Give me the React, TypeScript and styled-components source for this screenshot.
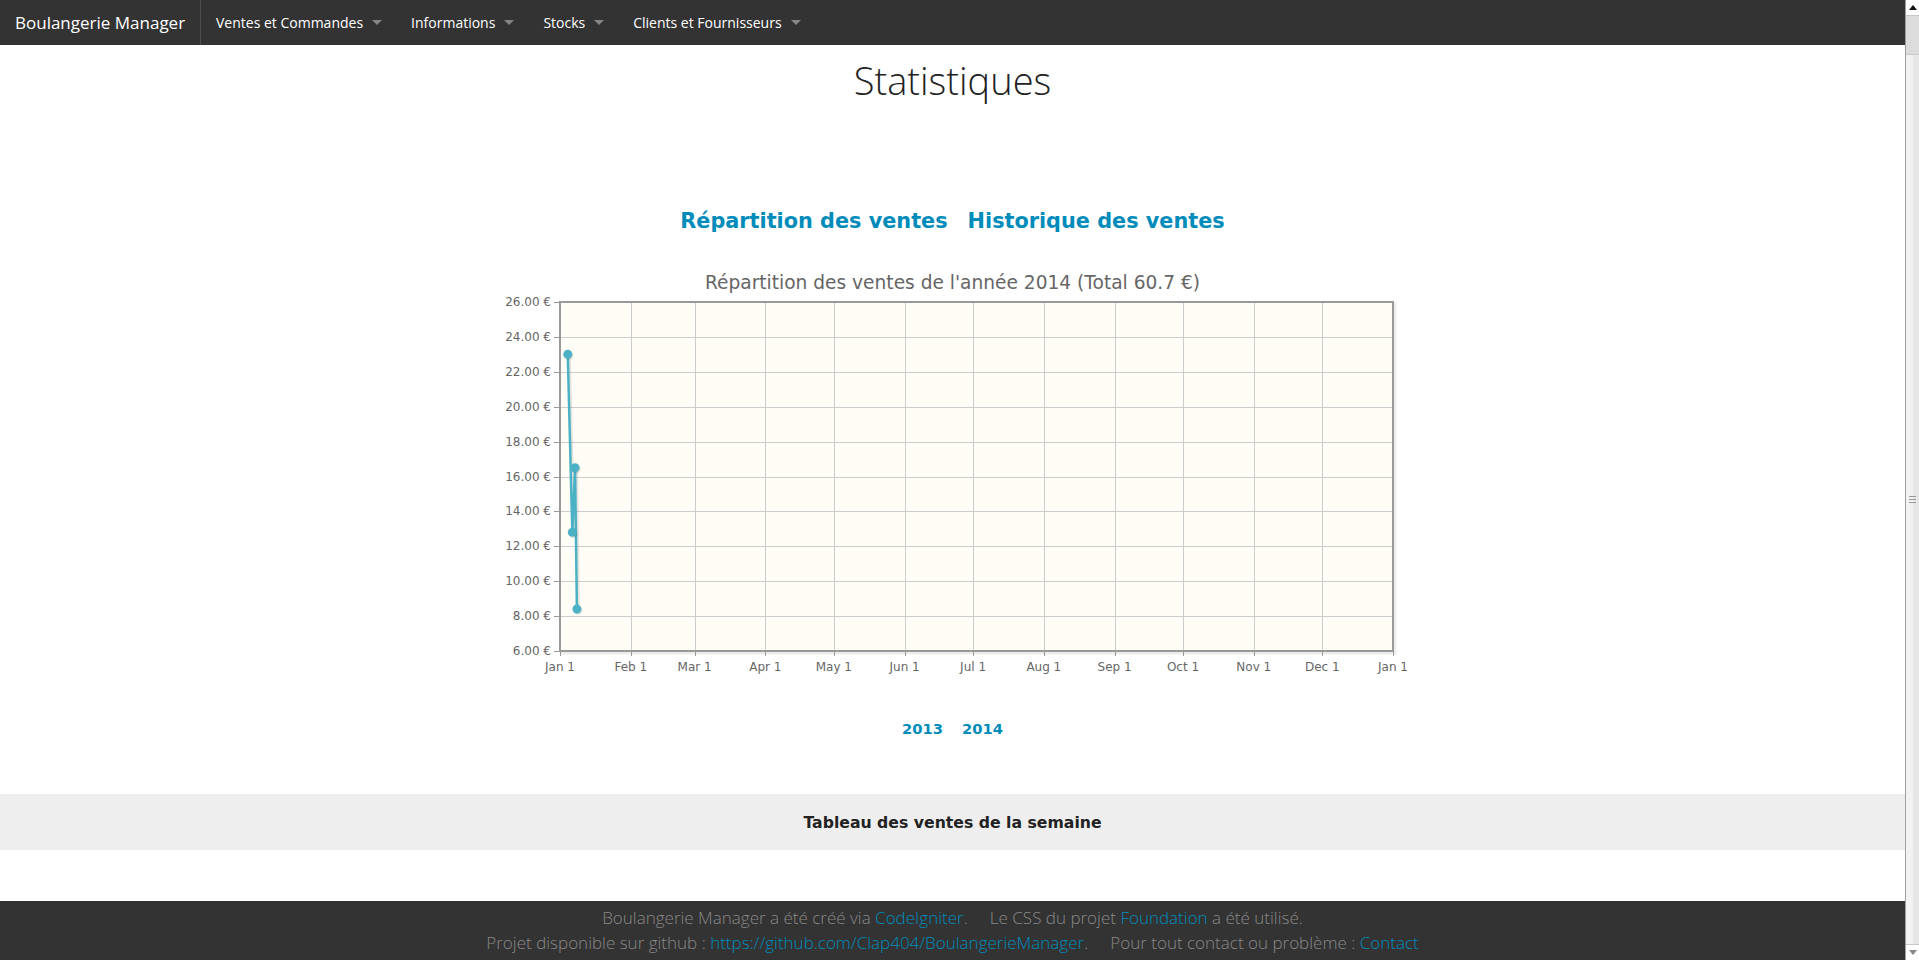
import React from 'react'
import styled, { createGlobalStyle } from 'styled-components'

const GlobalStyle = createGlobalStyle`
	html, body {
		margin: 0;
		padding: 0;
		background: #fff;
		font-family: 'Open Sans', 'Liberation Sans', sans-serif;
	}
	a {
		color: #008cba;
		text-decoration: none;
	}
`

const menus = ['Ventes et Commandes', 'Informations', 'Stocks', 'Clients et Fournisseurs']

// jqplot-like chart geometry
const CHART_W = 961
const CHART_H = 420
const PL = 88
const PR = 921
const PT = 39
const PB = 388
const Y_MIN = 6
const Y_MAX = 26
const months = [
	{ label: 'Jan 1', day: 0 },
	{ label: 'Feb 1', day: 31 },
	{ label: 'Mar 1', day: 59 },
	{ label: 'Apr 1', day: 90 },
	{ label: 'May 1', day: 120 },
	{ label: 'Jun 1', day: 151 },
	{ label: 'Jul 1', day: 181 },
	{ label: 'Aug 1', day: 212 },
	{ label: 'Sep 1', day: 243 },
	{ label: 'Oct 1', day: 273 },
	{ label: 'Nov 1', day: 304 },
	{ label: 'Dec 1', day: 334 },
	{ label: 'Jan 1', day: 365 },
]
const sales = [
	{ day: 3.4, value: 23.0 },
	{ day: 5.4, value: 12.8 },
	{ day: 6.6, value: 16.5 },
	{ day: 7.4, value: 8.4 },
]

const xPos = (day: number) => PL + (day * (PR - PL)) / 365
const yPos = (v: number) => PT + ((Y_MAX - v) * (PB - PT)) / (Y_MAX - Y_MIN)
const crisp = (n: number) => Math.round(n) + 0.5

const SalesChart = () => {
	const yTicks: number[] = []
	for (let v = Y_MIN; v <= Y_MAX; v += 2) yTicks.push(v)
	const line = sales.map((p) => `${xPos(p.day)},${yPos(p.value)}`).join(' ')
	const shadowLine = sales.map((p) => `${xPos(p.day) + 1.5},${yPos(p.value) + 1.5}`).join(' ')

	return (
		<ChartSvg width={CHART_W} height={CHART_H} viewBox={`0 0 ${CHART_W} ${CHART_H}`}>
			<text x={480.5} y={19} textAnchor="middle" dominantBaseline="central" className="title">
				Répartition des ventes de l'année 2014 (Total 60.7 €)
			</text>
			<rect x={PL + 2} y={PT + 2} width={PR - PL} height={PB - PT} fill="none" stroke="rgba(0,0,0,0.07)" strokeWidth={3} />
			<rect x={PL} y={PT} width={PR - PL} height={PB - PT} fill="#fffdf6" />
			{yTicks.slice(1, -1).map((v) => (
				<line key={v} x1={PL} x2={PR} y1={crisp(yPos(v))} y2={crisp(yPos(v))} stroke="#cccccc" strokeWidth={1} />
			))}
			{months.slice(1, -1).map((m) => (
				<line key={m.day} x1={crisp(xPos(m.day))} x2={crisp(xPos(m.day))} y1={PT} y2={PB} stroke="#cccccc" strokeWidth={1} />
			))}
			<rect x={PL} y={PT} width={PR - PL} height={PB - PT} fill="none" stroke="#999999" strokeWidth={2} />
			{yTicks.map((v) => (
				<g key={v}>
					<line x1={PL - 6} x2={PL} y1={crisp(yPos(v))} y2={crisp(yPos(v))} stroke="#999999" strokeWidth={1} />
					<text x={PL - 9} y={yPos(v)} textAnchor="end" dominantBaseline="central" className="tick">
						{v.toFixed(2)} €
					</text>
				</g>
			))}
			{months.map((m, i) => (
				<g key={i}>
					<line x1={crisp(xPos(m.day))} x2={crisp(xPos(m.day))} y1={PB} y2={PB + 5} stroke="#999999" strokeWidth={1} />
					<text x={xPos(m.day)} y={404} textAnchor="middle" dominantBaseline="central" className="tick">
						{m.label}
					</text>
				</g>
			))}
			<polyline points={shadowLine} fill="none" stroke="rgba(0,0,0,0.1)" strokeWidth={3} strokeLinejoin="round" />
			<polyline points={line} fill="none" stroke="#4bb2c5" strokeWidth={2.5} strokeLinejoin="round" />
			{sales.map((p, i) => (
				<g key={i}>
					<circle cx={xPos(p.day) + 1.2} cy={yPos(p.value) + 1.2} r={4.5} fill="rgba(0,0,0,0.1)" />
					<circle cx={xPos(p.day)} cy={yPos(p.value)} r={4.5} fill="#4bb2c5" />
				</g>
			))}
		</ChartSvg>
	)
}

const MenuArrow = () => (
	<svg width={10} height={5} viewBox="0 0 10 5">
		<path d="M0 0 L10 0 L5 5 Z" fill="rgba(255,255,255,0.4)" />
	</svg>
)

export default function App() {
	return (
		<>
			<GlobalStyle />
			<Page>
				<Main>
					<TopBar>
						<Brand>Boulangerie Manager</Brand>
						<Menu>
							{menus.map((m) => (
								<MenuItem key={m}>
									{m}
									<ArrowSlot>
										<MenuArrow />
									</ArrowSlot>
								</MenuItem>
							))}
						</Menu>
					</TopBar>

					<PageTitle>Statistiques</PageTitle>

					<Tabs>
						<TabLink href="#">Répartition des ventes</TabLink>
						<TabLink href="#">Historique des ventes</TabLink>
					</Tabs>

					<ChartWrap>
						<SalesChart />
					</ChartWrap>

					<Years>
						<YearLink href="#">2013</YearLink>
						<YearLink href="#">2014</YearLink>
					</Years>

					<WeekBand>Tableau des ventes de la semaine</WeekBand>

					<Footer>
						<FooterLine>
							Boulangerie Manager a été créé via <a href="#">CodeIgniter</a>.&nbsp;&nbsp;&nbsp;&nbsp; Le CSS du projet{' '}
							<a href="#">Foundation</a> a été utilisé.
						</FooterLine>
						<FooterLine>
							Projet disponible sur github : <a href="#">https://github.com/Clap404/BoulangerieManager</a>.&nbsp;&nbsp;&nbsp;&nbsp; Pour tout
							contact ou problème : <a href="#">Contact</a>
						</FooterLine>
					</Footer>
				</Main>

				<Scrollbar>
					<ScrollButton>
						<svg width={8} height={5} viewBox="0 0 8 5">
							<path d="M0 5 L4 0 L8 5 Z" fill="#111" />
						</svg>
					</ScrollButton>
					<ScrollTrack $h={38} />
					<ScrollThumb>
						<Grip />
					</ScrollThumb>
					<ScrollButton>
						<svg width={8} height={5} viewBox="0 0 8 5">
							<path d="M0 0 L8 0 L4 5 Z" fill="#888" />
						</svg>
					</ScrollButton>
				</Scrollbar>
			</Page>
		</>
	)
}

const Page = styled.div`
	display: flex;
	height: 960px;
	overflow: hidden;
`

const Main = styled.div`
	flex: 1;
	display: flex;
	flex-direction: column;
	min-width: 0;
`

const TopBar = styled.nav`
	height: 45px;
	background: #333333;
	display: flex;
	align-items: stretch;
	flex-shrink: 0;
`

const Brand = styled.div`
	display: flex;
	align-items: center;
	padding: 0 15px;
	width: 170px;
	white-space: nowrap;
	color: #fff;
	font-size: 17px;
	border-right: 1px solid #4e4e4e;
`

const Menu = styled.ul`
	display: flex;
	margin: 0;
	padding: 0;
	list-style: none;
`

const MenuItem = styled.li`
	position: relative;
	display: flex;
	align-items: center;
	padding: 0 33px 0 15px;
	color: #fff;
	font-size: 14px;
	white-space: nowrap;
`

const ArrowSlot = styled.span`
	position: absolute;
	right: 14px;
	top: 20px;
	display: flex;
`

const PageTitle = styled.h1`
	margin: 15px 0 0;
	height: 40px;
	line-height: 40px;
	text-align: center;
	font-size: 38px;
	font-weight: 300;
	color: #222;
`

const Tabs = styled.div`
	margin-top: 109px;
	display: flex;
	justify-content: center;
	gap: 20px;
	height: 24px;
	line-height: 24px;
`

const TabLink = styled.a`
	font-family: 'DejaVu Sans', sans-serif;
	font-weight: bold;
	font-size: 20.8px;
`

const ChartWrap = styled.div`
	margin-top: 30px;
	display: flex;
	justify-content: center;
`

const ChartSvg = styled.svg`
	display: block;
	overflow: visible;
	font-family: 'DejaVu Sans', sans-serif;

	.title {
		font-size: 18.6px;
		fill: #666666;
	}
	.tick {
		font-size: 12px;
		fill: #666666;
	}
`

const Years = styled.div`
	margin-top: 36px;
	display: flex;
	justify-content: center;
	gap: 19px;
	height: 20px;
	line-height: 20px;
`

const YearLink = styled.a`
	font-family: 'DejaVu Sans', sans-serif;
	font-weight: bold;
	font-size: 14.7px;
`

const WeekBand = styled.div`
	margin-top: 55px;
	height: 56px;
	background: #eeeeee;
	display: flex;
	align-items: center;
	justify-content: center;
	font-family: 'DejaVu Sans', sans-serif;
	font-weight: bold;
	font-size: 15.7px;
	color: #222;
`

const Footer = styled.footer`
	margin-top: auto;
	background: #333333;
	padding: 4px 0 5px;
	text-align: center;
	color: #888888;
	font-size: 17px;
	font-weight: 300;
`

const FooterLine = styled.div`
	line-height: 25px;
	white-space: nowrap;
`

const Scrollbar = styled.div`
	width: 13px;
	flex-shrink: 0;
	display: flex;
	flex-direction: column;
	border-left: 1px solid #a0a0a0;
	background: #f1f1f1;
`

const ScrollButton = styled.div`
	height: 15px;
	background: #fff;
	display: flex;
	align-items: center;
	justify-content: center;
	flex-shrink: 0;
`

const ScrollTrack = styled.div<{ $h: number }>`
	height: ${(p) => p.$h}px;
	background: #dcdcdc;
	border-top: 1px solid #c8c8c8;
	flex-shrink: 0;
`

const ScrollThumb = styled.div`
	flex: 1;
	display: flex;
	align-items: center;
	justify-content: center;
	background: linear-gradient(to right, #f2f2f2 55%, #e6e6e6 55%);
	border-top: 1px solid #c8c8c8;
	border-bottom: 1px solid #c8c8c8;
`

const Grip = styled.div`
	width: 7px;
	height: 5px;
	border-top: 1px solid #999;
	border-bottom: 1px solid #999;
	background: linear-gradient(#999, #999) center / 100% 1px no-repeat;
`
